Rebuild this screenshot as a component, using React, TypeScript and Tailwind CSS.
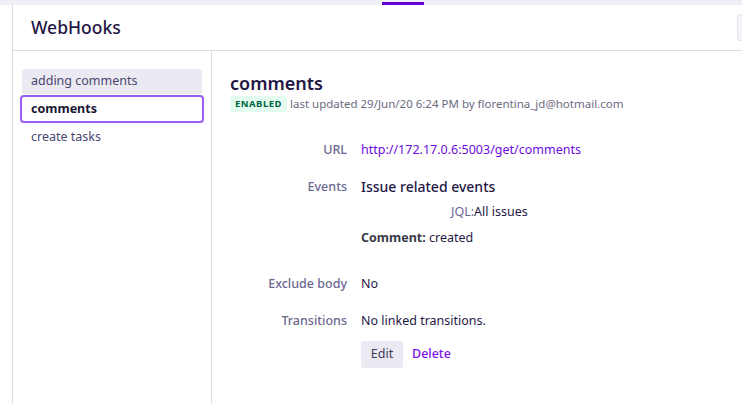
const rowLabel = 'w-[117px] shrink-0 text-right text-[12.5px] font-medium text-[#6b6890]';

const Sidebar = () => (
  <div className="w-[199px] shrink-0 border-r border-[#dddce6] px-[9px] pt-[18px]">
    <div className="flex h-[25px] items-center rounded-[3px] bg-[#ebe9f1] px-[9px] text-[12.5px] text-[#4a4670]">
      adding comments
    </div>
    <div className="-mx-[2px] mt-px flex h-[28px] items-center rounded-[4px] border-2 border-[#9a5cf5] bg-white px-[9px] text-[12.5px] font-bold text-[#1a1530]">
      comments
    </div>
    <div className="mt-[2px] flex h-[25px] items-center px-[9px] text-[12.5px] text-[#4a4670]">create tasks</div>
  </div>
);

const Details = () => (
  <div className="flex-1 pl-[18px] pt-[20px]">
    <h1 className="text-[18px] font-semibold leading-[24px] text-[#1f1744]">comments</h1>
    <div className="mt-[1px] flex items-center gap-[3px] leading-[16px]">
      <span className="rounded-[3px] bg-[#e3fcef] px-[5px] text-[9.5px] font-bold tracking-[0.5px] text-[#006644]">
        ENABLED
      </span>
      <span className="text-[11.5px] text-[#6b6b80]">last updated 29/Jun/20 6:24 PM by florentina_jd@hotmail.com</span>
    </div>

    <div className="mt-[30px] flex items-center gap-[14px] leading-[16px]">
      <div className={rowLabel}>URL</div>
      <a className="text-[12.5px] text-[#6c0ce0]">http://172.17.0.6:5003/get/comments</a>
    </div>

    <div className="mt-[20px] flex gap-[14px]">
      <div className={`${rowLabel} leading-[18px]`}>Events</div>
      <div>
        <div className="text-[14px] font-medium leading-[18px] text-[#1f1744]">Issue related events</div>
        <div className="ml-[90px] mt-[8px] text-[12.5px] leading-[16px] text-[#1f1744]">
          <span className="text-[#6b6890]">JQL:</span>All issues
        </div>
        <div className="mt-[10px] text-[12.5px] leading-[16px] text-[#1f1744]">
          <span className="font-bold text-[#3a3a48]">Comment:</span> created
        </div>
      </div>
    </div>

    <div className="mt-[30px] flex items-center gap-[14px] leading-[16px]">
      <div className={rowLabel}>Exclude body</div>
      <div className="text-[12.5px] text-[#1f1744]">No</div>
    </div>

    <div className="mt-[21px] flex items-center gap-[14px] leading-[16px]">
      <div className={rowLabel}>Transitions</div>
      <div className="text-[12.5px] text-[#1f1744]">No linked transitions.</div>
    </div>

    <div className="ml-[131px] mt-[12px] flex items-center gap-[9px]">
      <button type="button" className="h-[27px] w-[42px] rounded-[3px] bg-[#ebe9f1] text-[12.5px] text-[#3d3a60]">
        Edit
      </button>
      <button type="button" className="text-[12.5px] font-medium text-[#7a12e8]">
        Delete
      </button>
    </div>
  </div>
);

export default function App() {
  return (
    <div className="flex h-[403px] flex-col overflow-hidden bg-white font-['Noto_Sans',sans-serif]">
      <div className="relative h-[5px] shrink-0 bg-[#f0eff5]">
        <div className="absolute bottom-0 left-[382px] h-[3px] w-[42px] bg-[#6a00d8]" />
      </div>
      <div className="ml-[12px] flex flex-1 flex-col border-l border-[#dddce6]">
        <div className="flex h-[46px] shrink-0 items-center justify-between border-b border-[#dddce6] pl-[18px]">
          <span className="text-[17.5px] font-medium text-[#1f1744]">WebHooks</span>
          <div className="h-[27px] w-[5px] rounded-l-[3px] border border-r-0 border-[#e5e3ec] bg-[#f4f3f8]" />
        </div>
        <div className="flex flex-1">
          <Sidebar />
          <Details />
        </div>
      </div>
    </div>
  );
}
